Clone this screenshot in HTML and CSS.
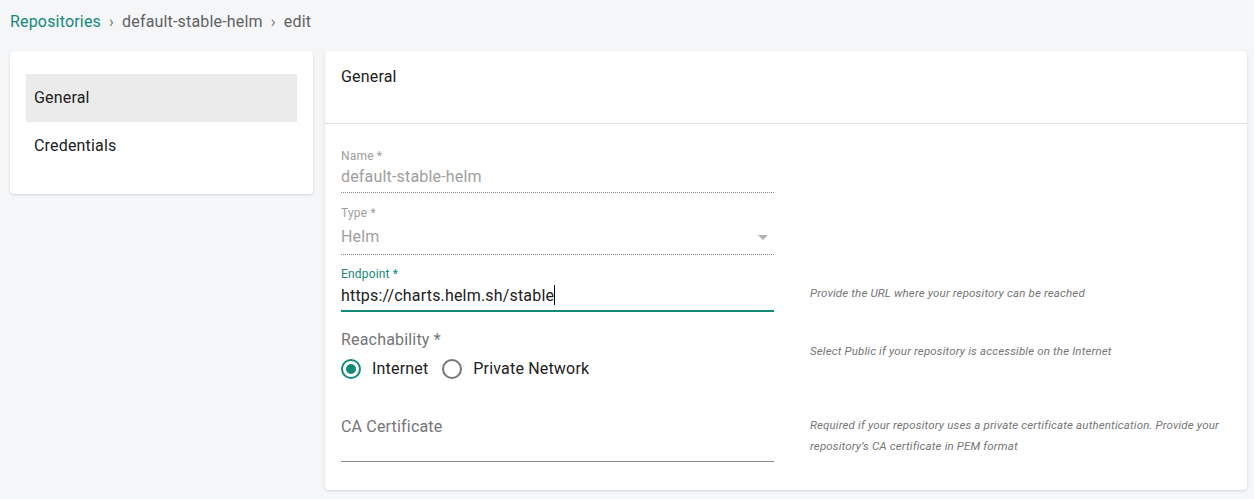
FILE: index.html
```html
<!DOCTYPE html>
<html lang="en">
<head>
    <meta charset="UTF-8">
    <title>Edit repository</title>
    <link rel="stylesheet" href="styles.css">
</head>
<body>

<div class="page">
    <nav class="breadcrumb">
        <a href="#" class="crumb-link">Repositories</a>
        <span class="crumb-sep">›</span>
        <span>default-stable-helm</span>
        <span class="crumb-sep">›</span>
        <span>edit</span>
    </nav>

    <div class="layout">
        <aside class="card side-nav">
            <div class="nav-item active">General</div>
            <div class="nav-item">Credentials</div>
        </aside>

        <main class="card form-card">
            <div class="form-header">General</div>

            <div class="form-body">
                <div class="row first">
                    <div class="field disabled">
                        <label class="field-label">Name *</label>
                        <div class="field-input">default-stable-helm</div>
                    </div>
                </div>

                <div class="row type-row">
                    <div class="field disabled select">
                        <label class="field-label">Type *</label>
                        <div class="field-input">Helm<span class="arrow"></span></div>
                    </div>
                </div>

                <div class="row endpoint-row">
                    <div class="field focused">
                        <label class="field-label">Endpoint *</label>
                        <div class="field-input">https://charts.helm.sh/stable<span class="caret"></span></div>
                    </div>
                    <p class="hint hint-endpoint">Provide the URL where your repository can be reached</p>
                </div>

                <div class="row reach-row">
                    <div class="field">
                        <div class="group-label">Reachability *</div>
                        <div class="radios">
                            <label class="radio checked"><span class="dot"></span>Internet</label>
                            <label class="radio"><span class="dot"></span>Private Network</label>
                        </div>
                    </div>
                    <p class="hint hint-reach">Select Public if your repository is accessible on the Internet</p>
                </div>

                <div class="row ca-row">
                    <div class="field textarea">
                        <div class="placeholder">CA Certificate</div>
                    </div>
                    <p class="hint">Required if your repository uses a private certificate authentication. Provide your repository’s CA certificate in PEM format</p>
                </div>
            </div>
        </main>
    </div>
</div>

</body>
</html>
```

FILE: styles.css
```css
/* Global */
body {
    margin: 0;
    background: #f5f6f8;
    font-family: Roboto, "Noto Sans", sans-serif;
    color: #212121;
    letter-spacing: 0.18px;
}

.page {
    padding: 10px 7px 9px 10px;
}

/* Breadcrumb */
.breadcrumb {
    font-size: 16px;
    line-height: 24px;
    color: #616161;
    display: flex;
    gap: 8px;
}

.crumb-link {
    color: #13897a;
    text-decoration: none;
}

.crumb-sep {
    color: #757575;
}

/* Layout */
.layout {
    display: flex;
    align-items: flex-start;
    gap: 12px;
    margin-top: 17px;
}

.card {
    background: #fff;
    border-radius: 4px;
    box-shadow: 0 1px 3px rgba(0, 0, 0, 0.14);
}

/* Side nav */
.side-nav {
    width: 271px;
    padding: 23px 16px 24px;
}

.nav-item {
    height: 48px;
    line-height: 48px;
    padding-left: 8px;
    font-size: 16px;
}

.nav-item.active {
    background: #ebebeb;
}

/* Form card */
.form-card {
    flex: 1;
}

.form-header {
    height: 73px;
    box-sizing: border-box;
    padding: 14px 16px 0;
    font-size: 16px;
    line-height: 24px;
    border-bottom: 1px solid #e0e0e0;
}

.form-body {
    padding: 0 16px 28px;
}

.row {
    display: flex;
    gap: 36px;
}

.row.first {
    margin-top: 24px;
}

.type-row {
    margin-top: 12px;
}

.endpoint-row {
    margin-top: 11px;
}

.field {
    width: 433px;
    flex: none;
}

.field-label {
    display: block;
    font-size: 12px;
    line-height: 16px;
    color: #757575;
}

.field-input {
    position: relative;
    font-size: 16px;
    line-height: 24px;
    padding: 1px 0 3px;
    border-bottom: 1px solid #8a8a8a;
}

.disabled .field-label,
.disabled .field-input {
    color: #9e9e9e;
}

.disabled .field-input {
    border-bottom: 1px dotted #8a8a8a;
}

.select .field-input {
    padding: 4px 0 5px;
}

.arrow {
    position: absolute;
    right: 6px;
    top: 14px;
    border-left: 5px solid transparent;
    border-right: 5px solid transparent;
    border-top: 5px solid #b0b0b0;
}

.focused .field-label {
    color: #13897a;
}

.focused .field-input {
    color: #212121;
    padding-top: 2px;
    padding-bottom: 2px;
    border-bottom: 2px solid #13897a;
}

.caret {
    display: inline-block;
    width: 1px;
    height: 20px;
    background: #000;
    vertical-align: -4px;
}

/* Radios */
.reach-row {
    margin-top: 16px;
}

.group-label {
    font-size: 16px;
    line-height: 24px;
    color: #757575;
}

.radios {
    display: flex;
    gap: 14px;
    margin-top: 5px;
}

.radio {
    display: flex;
    align-items: center;
    gap: 11px;
    font-size: 16px;
    line-height: 24px;
    color: #212121;
}

.dot {
    width: 16px;
    height: 16px;
    border: 2px solid #757575;
    border-radius: 50%;
    position: relative;
}

.radio.checked .dot {
    border-color: #13897a;
}

.radio.checked .dot::after {
    content: "";
    position: absolute;
    left: 3px;
    top: 3px;
    width: 10px;
    height: 10px;
    border-radius: 50%;
    background: #13897a;
}

/* Textarea */
.ca-row {
    margin-top: 34px;
}

.textarea {
    height: 46px;
    border-bottom: 1px solid #8a8a8a;
}

.placeholder {
    font-size: 16px;
    line-height: 24px;
    color: #757575;
}

/* Hints */
.hint {
    margin: 0;
    font-size: 11.5px;
    line-height: 21px;
    letter-spacing: 0.15px;
    font-style: italic;
    color: #757575;
}

.hint-endpoint {
    padding-top: 17px;
}

.hint-reach {
    padding-top: 13px;
}
```
